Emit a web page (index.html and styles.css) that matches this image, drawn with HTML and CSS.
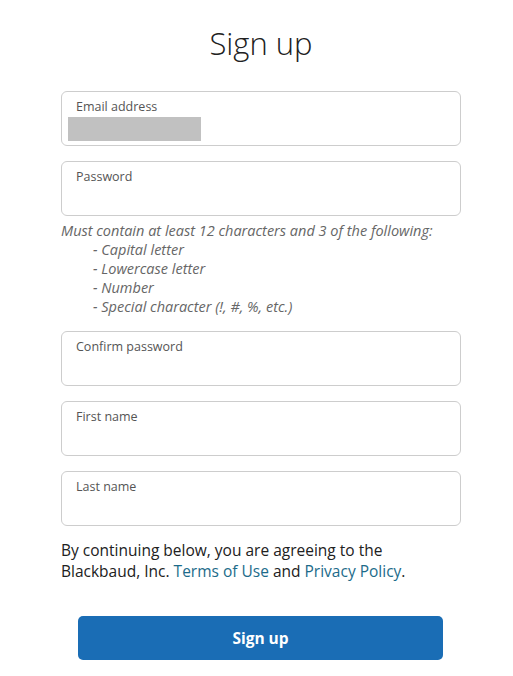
FILE: index.html
```html
<!DOCTYPE html>
<html lang="en">
<head>
<meta charset="utf-8">
<title>Sign up</title>
<link rel="stylesheet" href="styles.css">
</head>
<body>
<main class="signup">
  <h1 class="signup-title">Sign up</h1>
  <form class="signup-form">
    <label class="field">
      <span class="field-label">Email address</span>
      <span class="field-value"><span class="redacted"></span></span>
    </label>
    <div class="field-group">
      <label class="field">
        <span class="field-label">Password</span>
        <span class="field-value"></span>
      </label>
      <div class="hint">
        <p class="hint-lead">Must contain at least 12 characters and 3 of the following:</p>
        <ul class="hint-list">
          <li>- Capital letter</li>
          <li>- Lowercase letter</li>
          <li>- Number</li>
          <li>- Special character (!, #, %, etc.)</li>
        </ul>
      </div>
    </div>
    <label class="field">
      <span class="field-label">Confirm password</span>
      <span class="field-value"></span>
    </label>
    <label class="field">
      <span class="field-label">First name</span>
      <span class="field-value"></span>
    </label>
    <label class="field">
      <span class="field-label">Last name</span>
      <span class="field-value"></span>
    </label>
    <p class="terms">By continuing below, you are agreeing to the Blackbaud, Inc. <a href="#">Terms of Use</a> and <a href="#">Privacy Policy</a>.</p>
    <button type="button" class="btn-primary">Sign up</button>
  </form>
</main>
</body>
</html>
```

FILE: styles.css
```css
* { box-sizing: border-box; }

html, body {
  margin: 0;
  background: #fff;
}

body {
  font-family: "Open Sans", "Noto Sans", sans-serif;
  color: #212121;
  padding-left: 9px;
}

.signup {
  width: 400px;
  margin: 0 auto;
  padding-top: 21px;
}

.signup-title {
  margin: 0 0 26px;
  text-align: center;
  font-weight: 300;
  font-size: 31px;
  line-height: 44px;
  color: #212121;
}

.signup-form {
  display: flex;
  flex-direction: column;
  gap: 15px;
}

.field {
  display: flex;
  flex-direction: column;
  height: 55px;
  border: 1px solid #cdcdcd;
  border-radius: 6px;
  padding: 6px 14px 0 6px;
}

.field-label {
  font-size: 12.5px;
  line-height: 17px;
  color: #555;
  padding-left: 8px;
}

.field-value {
  display: block;
  height: 24px;
  margin-top: 2px;
}

.redacted {
  display: block;
  width: 133px;
  height: 24px;
  background: #c1c1c1;
}

.hint {
  margin-top: 5px;
  font-style: italic;
  font-size: 14.5px;
  line-height: 19px;
  color: #666;
}

.hint-lead { margin: 0; }

.hint-list {
  list-style: none;
  margin: 0;
  padding: 0 0 0 32px;
}

.terms {
  max-width: 360px;
  margin: -1px 0 0;
  font-size: 15.5px;
  line-height: 21px;
  color: #212121;
}

.terms a {
  color: #1c6b8a;
  text-decoration: none;
}

.btn-primary {
  align-self: center;
  width: 365px;
  height: 44px;
  margin-top: 19px;
  margin-right: 1px;
  border: 0;
  border-radius: 5px;
  background: #1a6db5;
  color: #fff;
  font-family: inherit;
  font-size: 15.5px;
  font-weight: 700;
}
```
